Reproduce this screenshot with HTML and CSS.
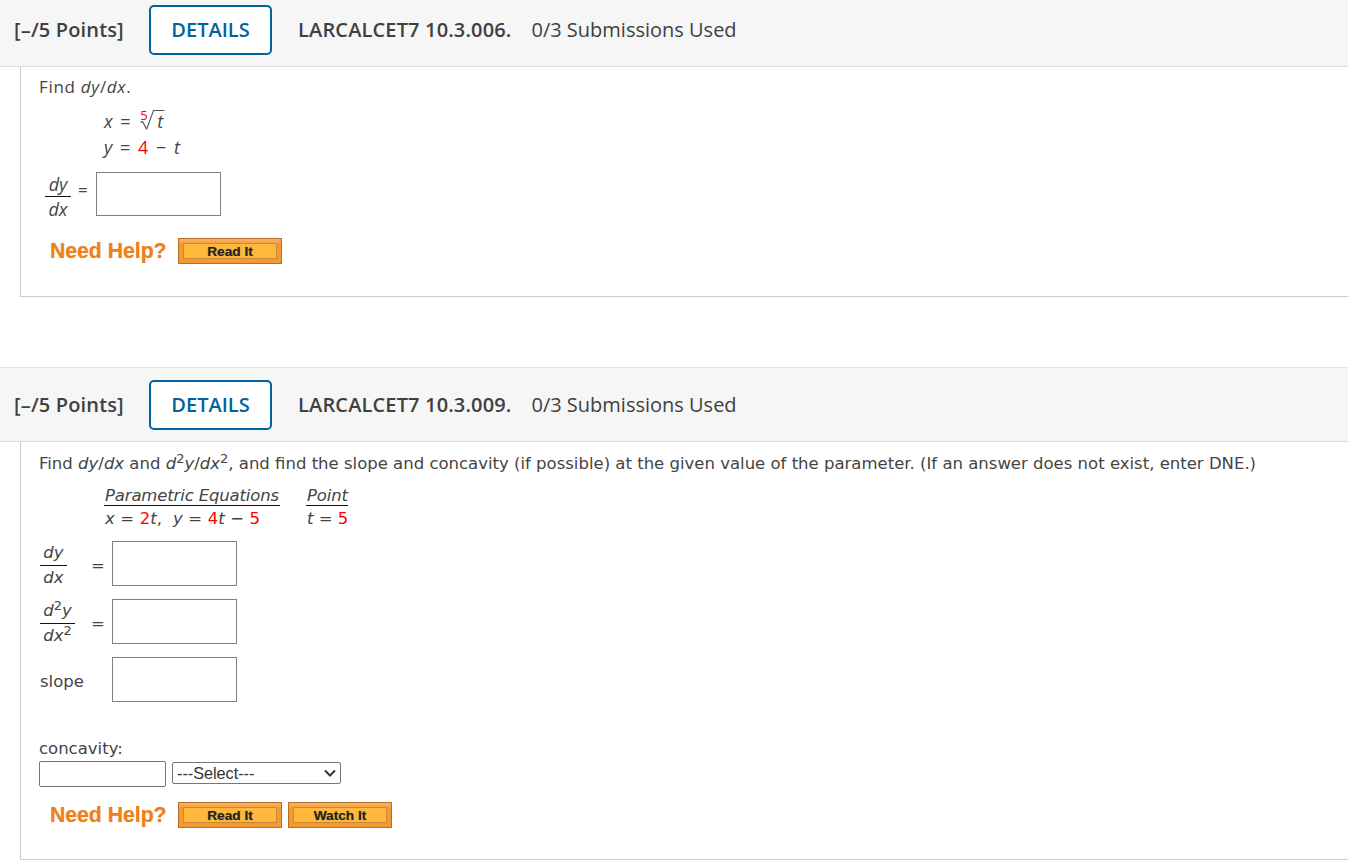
FILE: index.html
```html
<!DOCTYPE html>
<html lang="en">
<head>
<meta charset="utf-8">
<title>Questions</title>
<link rel="stylesheet" href="styles.css">
</head>
<body>
<section class="question first">
  <header class="qhead">
    <span class="points">[&ndash;/5 Points]</span>
    <a class="details">DETAILS</a>
    <span class="code">LARCALCET7 10.3.006.</span>
    <span class="subs">0/3 Submissions Used</span>
  </header>
  <div class="qbody q1">
    <p class="prompt">Find <i>dy</i>/<i>dx</i>.</p>
    <div class="eqs">
      <div class="eq"><i>x</i> = <span class="root"><sup class="index">5</sup><svg class="radical" width="26" height="24" viewBox="0 0 26 24"><path d="M0.5 14.5 L2.5 13.5 L6.5 21" fill="none" stroke="#555" stroke-width="1.2"/><path d="M6.5 21.5 L13.5 2.5 L24.5 2.5" fill="none" stroke="#555" stroke-width="1.1"/></svg><i class="radicand">t</i></span></div>
      <div class="eq"><i>y</i> = <b class="red">4</b> &minus; <i>t</i></div>
    </div>
    <div class="answer a1">
      <span class="frac"><span class="num"><i>dy</i></span><span class="den"><i>dx</i></span></span>
      <span class="equals">=</span>
      <input class="box" type="text" aria-label="dy/dx">
    </div>
    <div class="help">
      <span class="need">Need Help?</span>
      <a class="hbtn"><span>Read It</span></a>
    </div>
  </div>
</section>

<section class="question second">
  <header class="qhead">
    <span class="points">[&ndash;/5 Points]</span>
    <a class="details">DETAILS</a>
    <span class="code">LARCALCET7 10.3.009.</span>
    <span class="subs">0/3 Submissions Used</span>
  </header>
  <div class="qbody q2">
    <p class="prompt wide">Find <i>dy</i>/<i>dx</i> and <i>d</i><sup>2</sup><i>y</i>/<i>dx</i><sup>2</sup>, and find the slope and concavity (if possible) at the given value of the parameter. (If an answer does not exist, enter DNE.)</p>
    <div class="ptable">
      <div class="pcol pc1"><span class="phead"><i>Parametric Equations</i></span><span class="pval"><i>x</i> = <b class="red">2</b><i>t</i>,&nbsp; <i>y</i> = <b class="red">4</b><i>t</i> &minus; <b class="red">5</b></span></div>
      <div class="pcol pc2"><span class="phead"><i>Point</i></span><span class="pval"><i>t</i> = <b class="red">5</b></span></div>
    </div>
    <div class="answers wide">
      <div class="frac f2"><span class="num"><i>dy</i></span><span class="den"><i>dx</i></span></div>
      <span class="equals">=</span>
      <input class="box" type="text" aria-label="dy/dx">
      <div class="frac f2"><span class="num"><i>d</i><sup>2</sup><i>y</i></span><span class="den"><i>dx</i><sup>2</sup></span></div>
      <span class="equals">=</span>
      <input class="box" type="text" aria-label="second derivative">
      <span class="slope">slope</span>
      <span></span>
      <input class="box" type="text" aria-label="slope">
    </div>
    <p class="conc wide">concavity:</p>
    <div class="concrow">
      <input class="small" type="text" aria-label="concavity">
      <div class="selwrap">
        <select class="sel" aria-label="concavity select"><option>---Select---</option></select>
        <svg class="chev" width="12" height="8" viewBox="0 0 12 8"><path d="M1 1.5 L6 6.5 L11 1.5" fill="none" stroke="#333" stroke-width="2"/></svg>
      </div>
    </div>
    <div class="help help2">
      <span class="need">Need Help?</span>
      <a class="hbtn"><span>Read It</span></a>
      <a class="hbtn"><span>Watch It</span></a>
    </div>
  </div>
</section>
</body>
</html>
```
FILE: styles.css
```css
* { box-sizing: border-box; }
html, body { margin: 0; padding: 0; }
body {
  background: #fff;
  color: #444;
  font-family: "Open Sans", sans-serif;
  font-size: 17px;
  overflow: hidden;
  height: 862px;
}
.qhead {
  display: flex;
  align-items: center;
  background: #f6f6f6;
  border-bottom: 1px solid #ddd;
  padding-left: 14px;
  color: #444;
  font-size: 20px;
}
.first .qhead { height: 67px; padding-bottom: 6px; }
.second { margin-top: 70px; }
.second .qhead { height: 75px; border-top: 1px solid #e4e4e4; padding-top: 1px; }
.points { font-weight: 600; width: 135px; white-space: nowrap; color: #404040; letter-spacing: 0.15px; margin-bottom: 2px; }
.details {
  display: flex;
  align-items: center;
  justify-content: center;
  width: 123px;
  height: 50px;
  padding-bottom: 2px;
  border: 2px solid #00639c;
  border-radius: 5px;
  background: #fff;
  color: #00639c;
  font-weight: 600;
}
.code { font-weight: 600; margin-left: 26px; color: #404040; white-space: nowrap; letter-spacing: 0.15px; margin-bottom: 2px; }
.subs { margin-left: 20px; color: #404040; white-space: nowrap; margin-bottom: 2px; }
.qbody {
  margin-left: 20px;
  border-left: 1px solid #ccc;
  border-bottom: 1px solid #ccc;
}
.q1 { height: 230px; padding: 8px 0 0 18px; }
.q2 { height: 418px; padding: 8px 0 0 18px; }
p { margin: 0; }
i { font-style: italic; }
.red { color: #f00; font-weight: 400; }
.prompt { line-height: 24px; letter-spacing: 0.7px; }
.eqs { margin: 10px 0 0 65px; font-size: 18px; letter-spacing: 0.5px; }
.eq { height: 27px; line-height: 24px; display: block; word-spacing: 2px; }
.eq:first-child { height: 26px; }
.root { position: relative; display: inline-block; width: 26px; height: 24px; margin-left: 2px; vertical-align: top; }
.index { position: absolute; left: 0; top: -1px; color: #f00; font-size: 13px; line-height: 14px; vertical-align: baseline; }
.radical { position: absolute; left: 0; top: -1px; }
.radicand { position: absolute; left: 17px; top: 0; }
.answer { display: flex; align-items: flex-start; margin: 10px 0 0 6px; }
.frac { display: inline-flex; flex-direction: column; align-items: stretch; }
.num { display: block; text-align: center; border-bottom: 1px solid #111; line-height: 24px; height: 25px; }
.den { display: block; text-align: center; line-height: 24px; height: 24px; }
.a1 .frac { width: 26px; font-size: 18px; }
.a1 .equals { width: 25px; padding-left: 7px; line-height: 36px; }
.box {
  width: 125px;
  height: 45px;
  border: 1px solid #808080;
  border-radius: 0;
  background: #fff;
  padding: 0;
  margin: 0;
}
.a1 .box { height: 44px; }
.help { display: flex; align-items: center; margin: 17px 0 0 11px; gap: 11px; }
.need {
  font-family: "Liberation Sans", Arial, sans-serif;
  font-weight: 700;
  font-size: 21.2px;
  color: #ee7f1a;
  width: 117px;
  white-space: nowrap;
  text-shadow: 0 0 1px rgba(238, 127, 26, 0.5);
}
.hbtn {
  display: block;
  width: 104px;
  height: 26px;
  padding: 4px;
  border: 1px solid #b0702a;
  background: linear-gradient(#f4b26a, #f5982f 25%, #f5982f);
  font-family: "Liberation Sans", Arial, sans-serif;
  font-weight: 700;
  font-size: 13.7px;
  color: #222;
  text-shadow: 0 0 1px rgba(34, 34, 34, 0.4);
}
.hbtn + .hbtn { margin-left: -5px; }
.hbtn span {
  display: flex;
  align-items: center;
  justify-content: center;
  height: 16px;
  width: 100%;
  background: #ffb83c;
  border: 1px solid #c98a3a;
}
.wide, .pcol, .slope { font-family: "DejaVu Sans", Verdana, sans-serif; font-size: 16.5px; }
.prompt.wide { line-height: 28px; letter-spacing: 0; white-space: nowrap; height: 28px; }
sup { font-size: 13px; line-height: 0; }
.ptable { display: flex; margin: 6px 0 0 65px; gap: 26px; }
.pcol { display: flex; flex-direction: column; }
.phead { border-bottom: 1px solid #111; line-height: 24px; height: 22px; white-space: nowrap; padding: 0 1px; letter-spacing: -0.15px; }
.pval { line-height: 24px; padding: 1px 0 0 1px; white-space: nowrap; }
.pc1 { width: 176px; }
.pc1 .pval { word-spacing: 0.3px; }
.pc2 { width: 42px; }
.answers {
  display: grid;
  grid-template-columns: 45px 27px 125px;
  grid-auto-rows: 45px;
  row-gap: 13px;
  align-items: center;
  margin: 10px 0 0 1px;
}
.f2 { margin-top: 4px; }
.f2 .num, .f2 .den { min-width: 26px; padding: 0 3.25px; }
.answers .frac { display: flex; width: fit-content; align-items: stretch; }
.answers .equals { padding: 4px 0 0 6px; }
.slope { display: block; padding-top: 4px; }
.conc { margin-top: 35px; line-height: 24px; letter-spacing: 0; }
.concrow { display: flex; align-items: flex-start; gap: 6px; }
.small { width: 127px; height: 26px; border: 1px solid #767676; border-radius: 2px; padding: 0; background: #fff; }
.selwrap { position: relative; width: 169px; height: 22px; margin-top: 1px; }
.sel {
  display: block;
  appearance: none;
  width: 169px;
  height: 22px;
  border: 1px solid #767676;
  border-radius: 2px;
  background: #fff;
  color: #333;
  font-family: "Liberation Sans", Arial, sans-serif;
  font-size: 16.2px;
  padding: 0 0 0 4px;
}
.chev { position: absolute; right: 5px; top: 7px; pointer-events: none; }
.help2 { margin-top: 15px; }
```
